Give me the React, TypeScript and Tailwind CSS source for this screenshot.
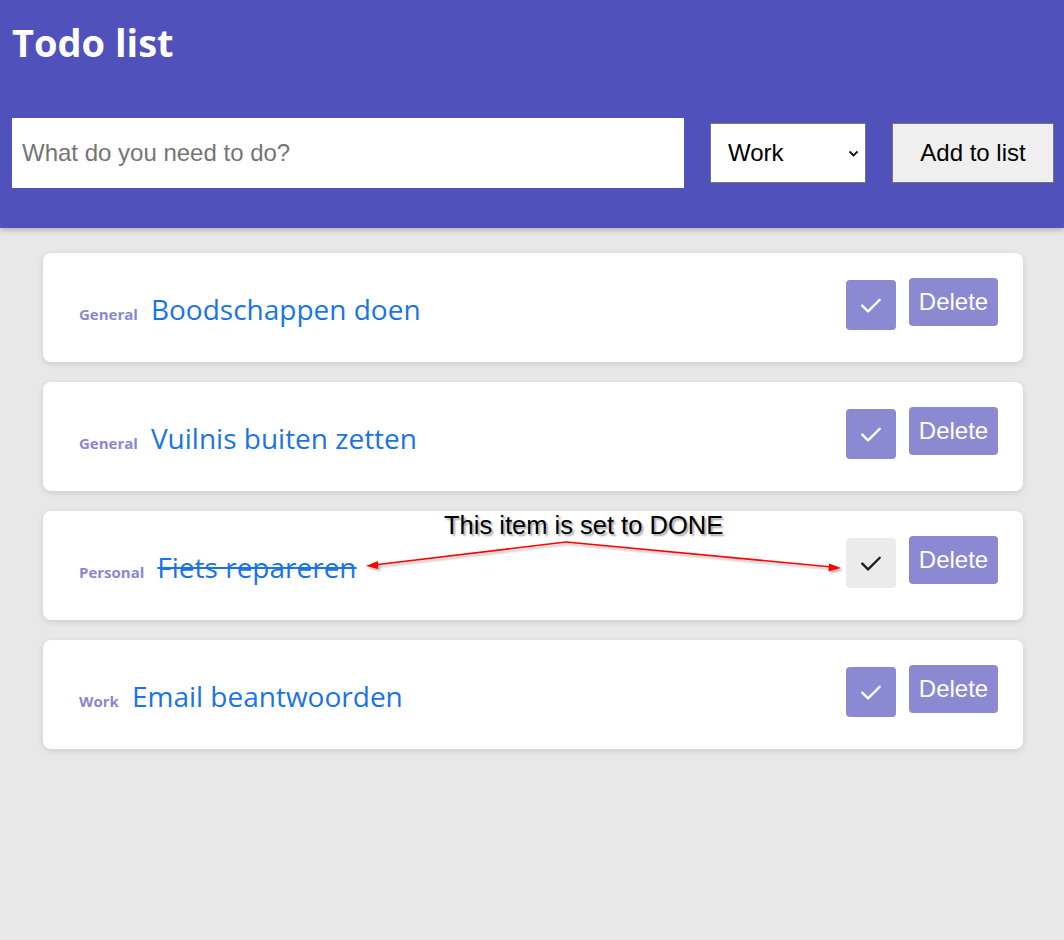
const todos = [
  { id: 1, category: "General", title: "Boodschappen doen", done: false },
  { id: 2, category: "General", title: "Vuilnis buiten zetten", done: false },
  { id: 3, category: "Personal", title: "Fiets repareren", done: true },
  { id: 4, category: "Work", title: "Email beantwoorden", done: false },
];

function CheckIcon({ done }: { done: boolean }) {
  return (
    <svg width="28" height="28" viewBox="0 0 24 24" fill="none" aria-hidden="true">
      <path
        d="M4.5 12.5l5 5 10-10"
        stroke={done ? "#1f1f1f" : "#ffffff"}
        strokeWidth="2"
        strokeLinecap="round"
        strokeLinejoin="round"
      />
    </svg>
  );
}

export default function App() {
  return (
    <div className="relative min-h-[940px] bg-[#e8e8e8] font-['Open_Sans',sans-serif]">
      {/* Header */}
      <header className="h-[228px] bg-[#5051bb] pl-3 pr-[10px] pt-[14px] shadow-[0_2px_6px_rgba(0,0,0,0.25)]">
        <h1 className="text-[38px] leading-[56px] font-bold text-white">Todo list</h1>
        <form className="mt-[48px] flex items-center gap-[26px] font-['Liberation_Sans',Arial,sans-serif]">
          <input
            type="text"
            placeholder="What do you need to do?"
            className="h-[70px] w-[672px] shrink-0 bg-white px-[10px] text-[24px] text-black placeholder:text-[#757575] outline-none"
          />
          <div className="relative h-[60px] w-[156px] shrink-0 border border-[#767676] bg-white">
            <span className="absolute left-[17px] top-[15px] text-[24px] leading-[28px] text-black">Work</span>
            <svg className="absolute right-[6px] top-[26px]" width="11" height="8" viewBox="0 0 11 8" fill="none">
              <path d="M1.5 1.5l4 4 4-4" stroke="#111" strokeWidth="1.8" />
            </svg>
          </div>
          <button
            type="button"
            className="h-[60px] w-[162px] shrink-0 border border-[#767676] bg-[#efefef] text-[24px] text-black"
          >
            Add to list
          </button>
        </form>
      </header>

      {/* List */}
      <ul className="mx-auto mt-[25px] flex w-[980px] translate-x-[1px] flex-col gap-[20px]">
        {todos.map((todo) => (
          <li
            key={todo.id}
            className="flex h-[109px] items-center justify-between rounded-[8px] bg-white pl-[36px] pr-[25px] shadow-[0_2px_6px_rgba(0,0,0,0.12)]"
          >
            <div className="mt-[2px] flex items-baseline gap-[13px]">
              <span className="text-[15px] font-bold text-[#8a87d1]">{todo.category}</span>
              <span
                className={
                  todo.done
                    ? "text-[28px] text-[#1a73e8] line-through decoration-2"
                    : "text-[28px] text-[#1a73e8]"
                }
              >
                {todo.title}
              </span>
            </div>
            <div className="flex items-start gap-[13px] self-start pt-[25px]">
              <button
                type="button"
                className={
                  todo.done
                    ? "mt-[2px] flex h-[50px] w-[50px] items-center justify-center rounded-[4px] bg-[#ebebeb]"
                    : "mt-[2px] flex h-[50px] w-[50px] items-center justify-center rounded-[4px] bg-[#8b89d2]"
                }
              >
                <CheckIcon done={todo.done} />
              </button>
              <button
                type="button"
                className="h-[48px] w-[89px] rounded-[4px] bg-[#8b89d2] font-['Liberation_Sans',Arial,sans-serif] text-[24px] text-white"
              >
                Delete
              </button>
            </div>
          </li>
        ))}
      </ul>

      {/* Annotation overlay */}
      <div className="pointer-events-none absolute left-[444px] top-[509px] font-['Liberation_Sans',Arial,sans-serif] text-[25.5px] leading-[32px] text-black [text-shadow:2px_2px_2px_rgba(0,0,0,0.35)]">
        This item is set to DONE
      </div>
      <svg
        className="pointer-events-none absolute left-0 top-0"
        width="1064"
        height="940"
        viewBox="0 0 1064 940"
        fill="none"
      >
        <defs>
          <filter id="sh" x="-10%" y="-50%" width="120%" height="200%">
            <feDropShadow dx="2" dy="2" stdDeviation="1.2" floodColor="#000" floodOpacity="0.3" />
          </filter>
        </defs>
        <g filter="url(#sh)" stroke="#ff0000" strokeWidth="1.6" fill="#ff0000">
          <path d="M566 542 L374 565" fill="none" />
          <path d="M566 542 L832 567" fill="none" />
          <path d="M366 566 L378 561 L378 569 Z" stroke="none" />
          <path d="M841 568 L829 563.5 L828.5 571.5 Z" stroke="none" />
        </g>
      </svg>
    </div>
  );
}
